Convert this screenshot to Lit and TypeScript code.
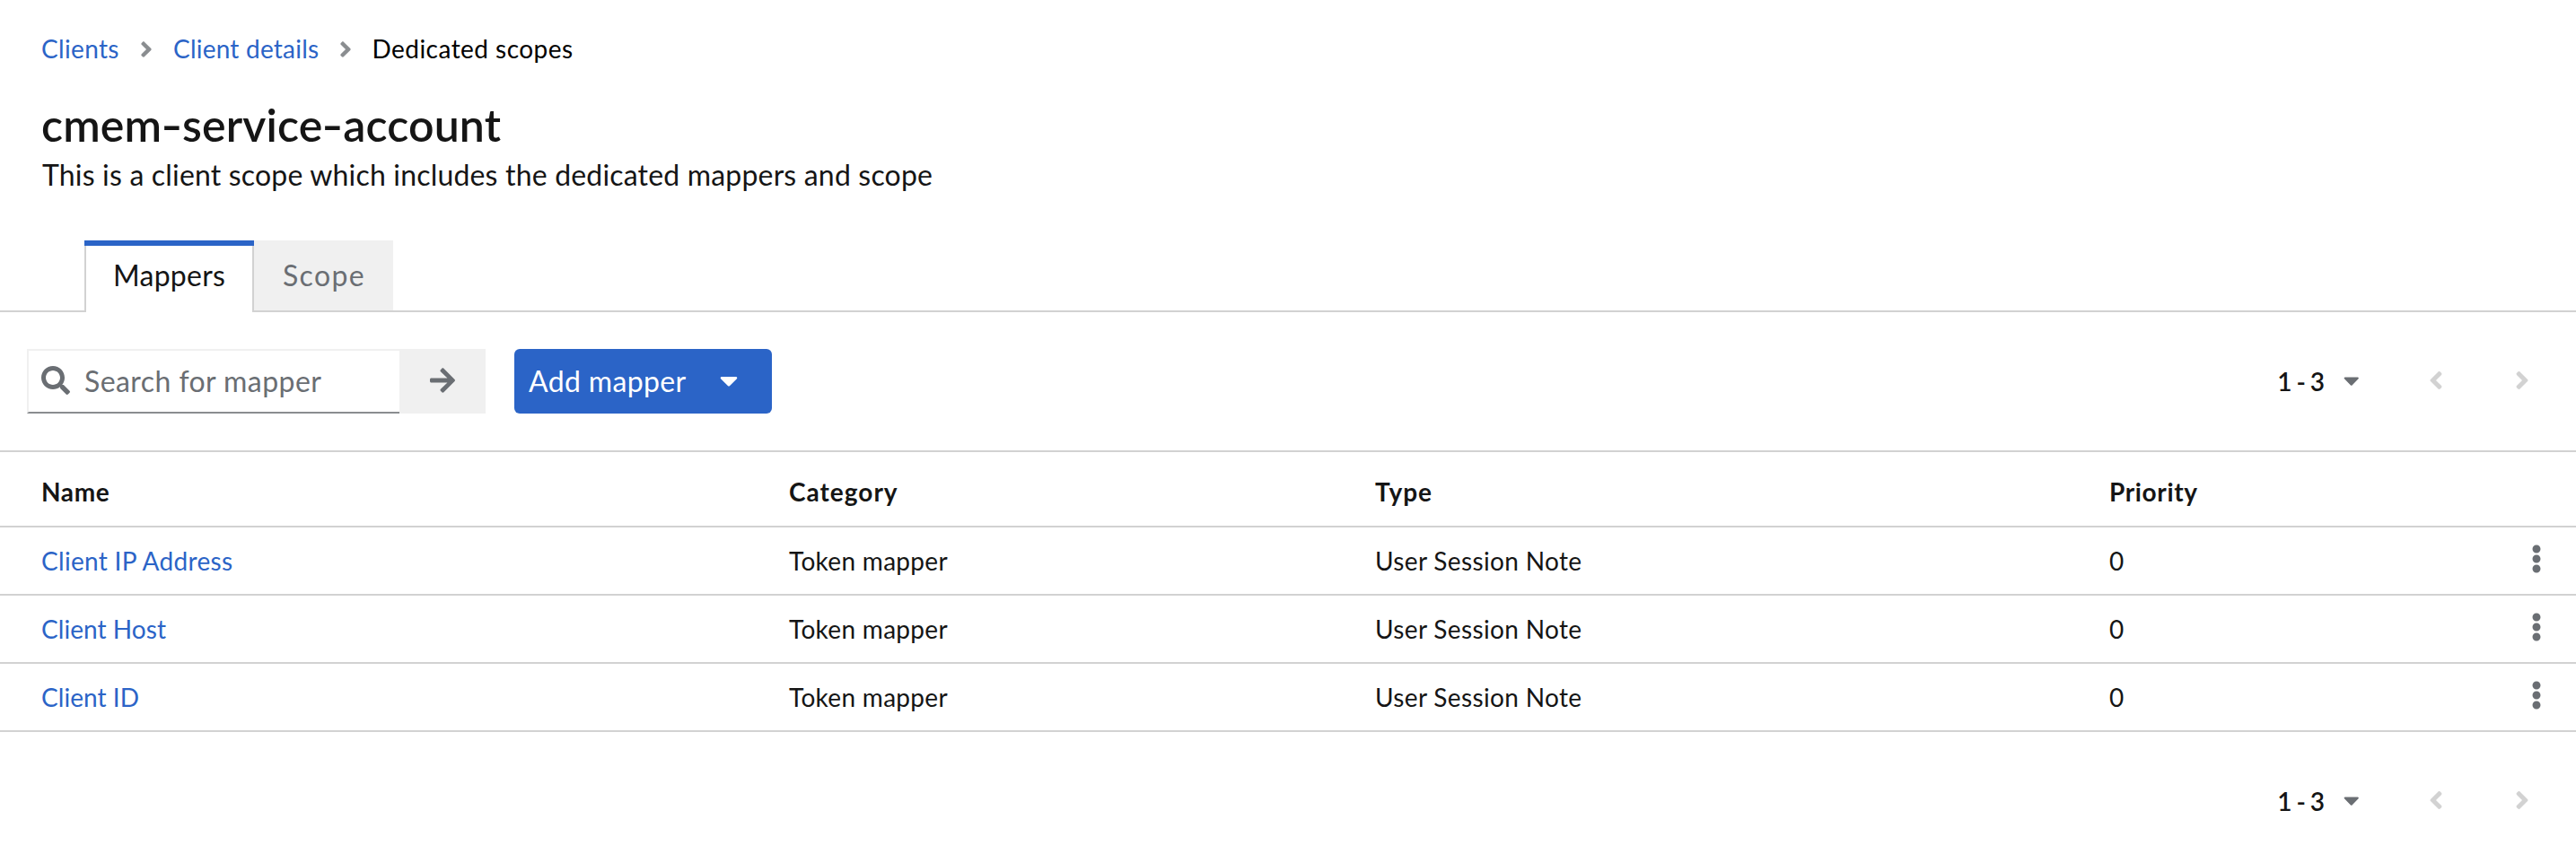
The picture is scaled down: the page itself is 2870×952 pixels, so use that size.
import { LitElement, html, css, svg } from "lit";
import { customElement } from "lit/decorators.js";
import { classMap } from "lit/directives/class-map.js";

const PATHS: Record<string, [number, string]> = {
  search: [512, "M505 442.7L405.3 343c-4.5-4.5-10.6-7-17-7H372c27.6-35.3 44-79.7 44-128C416 93.1 322.9 0 208 0S0 93.1 0 208s93.1 208 208 208c48.3 0 92.7-16.4 128-44v16.3c0 6.4 2.5 12.5 7 17l99.7 99.7c9.4 9.4 24.6 9.4 33.9 0l28.3-28.3c9.4-9.4 9.4-24.6.1-34zM208 336c-70.7 0-128-57.2-128-128 0-70.7 57.2-128 128-128 70.7 0 128 57.2 128 128 0 70.7-57.2 128-128 128z"],
  arrow: [448, "M190.5 66.9l22.2-22.2c9.4-9.4 24.6-9.4 33.9 0L441 239c9.4 9.4 9.4 24.6 0 33.9L246.6 467.3c-9.4 9.4-24.6 9.4-33.9 0l-22.2-22.2c-9.5-9.5-9.3-25 .4-34.3L311.4 296H24c-13.3 0-24-10.7-24-24v-32c0-13.3 10.7-24 24-24h287.4L190.9 101.2c-9.8-9.3-10-24.8-.4-34.3z"],
  right: [256, "M224.3 273l-136 136c-9.4 9.4-24.6 9.4-33.9 0l-22.6-22.6c-9.4-9.4-9.4-24.6 0-33.9l96.4-96.4-96.4-96.4c-9.4-9.4-9.4-24.6 0-33.9L54.3 103c9.4-9.4 24.6-9.4 33.9 0l136 136c9.5 9.4 9.5 24.6.1 34z"],
  left: [256, "M31.7 239l136-136c9.4-9.4 24.6-9.4 33.9 0l22.6 22.6c9.4 9.4 9.4 24.6 0 33.9L127.9 256l96.4 96.4c9.4 9.4 9.4 24.6 0 33.9L201.7 409c-9.4 9.4-24.6 9.4-33.9 0l-136-136c-9.5-9.4-9.5-24.6-.1-34z"],
  caret: [320, "M31.3 192h257.3c17.8 0 26.7 21.5 14.1 34.1L174.1 354.8c-7.8 7.8-20.5 7.8-28.3 0L17.2 226.1C4.6 213.5 13.5 192 31.3 192z"],
  kebab: [192, "M96 184c39.8 0 72 32.2 72 72s-32.2 72-72 72-72-32.2-72-72 32.2-72 72-72zM24 80c0 39.8 32.2 72 72 72s72-32.2 72-72S135.8 8 96 8 24 40.2 24 80zm0 352c0 39.8 32.2 72 72 72s72-32.2 72-72-32.2-72-72-72-72 32.2-72 72z"],
};

const icon = (name: string, size = 32) => {
  const [w, d] = PATHS[name];
  return html`<svg class="icon" width=${(w * size) / 512} height=${size} viewBox="0 0 ${w} 512" fill="currentColor" aria-hidden="true">${svg`<path d=${d}></path>`}</svg>`;
};

const MAPPERS = [
  { name: "Client IP Address", category: "Token mapper", type: "User Session Note", priority: 0 },
  { name: "Client Host", category: "Token mapper", type: "User Session Note", priority: 0 },
  { name: "Client ID", category: "Token mapper", type: "User Session Note", priority: 0 },
];

@customElement("app-root")
class AppRoot extends LitElement {
  static styles = css`
    :host { display: block; height: 952px; overflow: hidden; background: #fff; color: #151515;
      font-family: Lato, "Open Sans", sans-serif; font-size: 28px; letter-spacing: 0.3px; white-space: nowrap; }
    * { box-sizing: border-box; }
    a { color: #2b64c7; text-decoration: none; }
    button { font: inherit; letter-spacing: inherit; border: 0; padding: 0; margin: 0; background: none; color: inherit; text-align: left; }
    .icon { display: block; flex: none; }

    .top { padding-top: 33px; height: 268px; }
    .crumbs { display: flex; align-items: center; height: 42px; margin: 0 0 0 46px; padding: 0; list-style: none; }
    .crumbs li { display: flex; align-items: center; }
    .crumbs .icon { color: #8a8d90; margin-top: 2px; }
    .crumb-a { width: 110px; letter-spacing: 0.34px; }
    .crumb-b { width: 185px; margin-left: 23px; letter-spacing: 0.22px; }
    .crumb-c { margin-left: 22.5px; color: #000; letter-spacing: 0.46px; }
    h1 { margin: 34px 0 0 46px; font-size: 50px; line-height: 60px; font-weight: 600; letter-spacing: 0.15px; }
    .dash { display: inline-block; transform: scaleX(1.3); margin: 0 2px; }
    .desc { margin: 2px 0 0 47px; font-size: 32px; line-height: 48px; letter-spacing: 0.18px; }

    .tabs { display: flex; height: 80px; font-size: 32px; line-height: 48px; }
    .tabs .pad { width: 94px; border-bottom: 2px solid #d2d2d2; }
    .tabs .fill { flex: 1; border-bottom: 2px solid #d2d2d2; }
    .active { width: 189px; display: flex; flex-direction: column; }
    .active .bar { height: 6px; background: #2b64c7; }
    .active .body { flex: 1; border: solid #d2d2d2; border-width: 0 2px; padding: 9px 0 0 30px; letter-spacing: 0.26px; }
    .scope { width: 155px; padding: 15px 0 0 32px; background: #f0f0f0; color: #6a6e73; border-bottom: 2px solid #d2d2d2; letter-spacing: 1.35px; }

    .toolbar { display: flex; align-items: flex-start; height: 154px; padding: 41px 30px 0; font-size: 32px; line-height: 48px; }
    .search { display: flex; align-items: center; width: 415px; height: 72px; border: solid #f0f0f0; border-width: 2px 0 2px 2px; border-bottom-color: #8a8d90; padding-left: 14px; color: #6a6e73; }
    .search .icon { margin-bottom: 2px; }
    .search span { margin-left: 16px; padding-bottom: 1px; letter-spacing: 0.43px; }
    .go { display: flex; align-items: center; justify-content: center; width: 96px; height: 72px; padding-bottom: 2px; background: #f0f0f0; color: #6a6e73; }
    .add { display: flex; align-items: center; width: 287px; height: 72px; margin-left: 32px; padding-left: 16px; border-radius: 6px; background: #2b64c7; color: #fff; letter-spacing: 0.35px; }
    .add span { width: 213px; padding-bottom: 1px; }
    .add .icon { margin-bottom: 2px; }

    .pager { display: flex; align-items: center; margin-left: auto; height: 70px; font-size: 28px; font-weight: 600; }
    .pager .range { width: 74px; padding-top: 1px; letter-spacing: 0; word-spacing: -2px; }
    .pager .caret { width: 94.75px; color: #6a6e73; }
    .pager .nav { width: 96px; color: #d2d2d2; }
    .pager .nav + .nav { width: 38px; }

    .row { display: grid; grid-template-columns: 833px 653px 818px 470px 1fr; align-items: center; height: 76px; padding-left: 46px; border-bottom: 2px solid #d2d2d2; line-height: 40px; }
    .row > a, .row > span { padding-bottom: 1px; }
    .row.head { height: 86px; border-top: 2px solid #d2d2d2; font-weight: 700; padding-top: 7px; letter-spacing: 1px; }
    .row.head .tight { letter-spacing: 0.65px; }
    .row .icon { color: #6a6e73; margin-bottom: 4px; }
    .short { letter-spacing: 0.05px; }
    .type { letter-spacing: 0.35px; }
    .footer { display: flex; padding: 41px 30px 0; }
  `;

  pager() {
    return html`<div class="pager">
      <span class="range">1 - 3</span>
      <span class="caret">${icon("caret", 28)}</span>
      <span class="nav">${icon("left")}</span>
      <span class="nav">${icon("right")}</span>
    </div>`;
  }

  render() {
    return html`
      <header class="top">
        <ol class="crumbs">
          <li class="crumb-a"><a href="#">Clients</a></li>
          <li>${icon("right", 28)}</li>
          <li class="crumb-b"><a href="#">Client details</a></li>
          <li>${icon("right", 28)}</li>
          <li class="crumb-c">Dedicated scopes</li>
        </ol>
        <h1>cmem<span class="dash">-</span>service<span class="dash">-</span>account</h1>
        <div class="desc">This is a client scope which includes the dedicated mappers and scope</div>
      </header>
      <nav class="tabs">
        <div class="pad"></div>
        <div class="active"><div class="bar"></div><div class="body">Mappers</div></div>
        <div class="scope">Scope</div>
        <div class="fill"></div>
      </nav>
      <div class="toolbar">
        <div class="search">${icon("search")}<span>Search for mapper</span></div>
        <button class="go" aria-label="Search">${icon("arrow")}</button>
        <button class="add"><span>Add mapper</span>${icon("caret")}</button>
        ${this.pager()}
      </div>
      <div class="row head"><span class="tight">Name</span><span>Category</span><span>Type</span><span class="tight">Priority</span></div>
      ${MAPPERS.map((m) => html`<div class="row">
        <a href="#" class=${classMap({ short: m.name.length < 12 })}>${m.name}</a><span>${m.category}</span><span class="type">${m.type}</span><span>${m.priority}</span>${icon("kebab")}
      </div>`)}
      <div class="footer">${this.pager()}</div>
    `;
  }
}
